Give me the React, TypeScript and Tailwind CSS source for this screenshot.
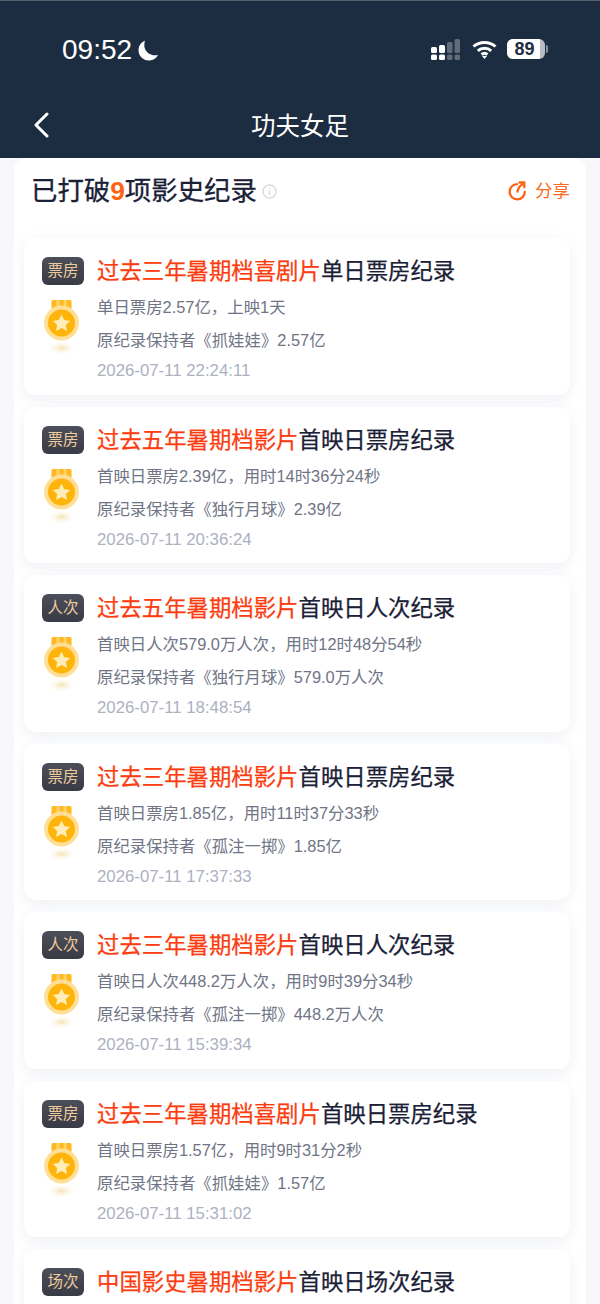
const font = { fontFamily: '"Liberation Sans", "Noto Sans CJK SC", sans-serif' };

const records = [
  { tag: '票房', red: '过去三年暑期档喜剧片', rest: '单日票房纪录', a: '单日票房2.57亿，上映1天', b: '原纪录保持者《抓娃娃》2.57亿', time: '2026-07-11 22:24:11' },
  { tag: '票房', red: '过去五年暑期档影片', rest: '首映日票房纪录', a: '首映日票房2.39亿，用时14时36分24秒', b: '原纪录保持者《独行月球》2.39亿', time: '2026-07-11 20:36:24' },
  { tag: '人次', red: '过去五年暑期档影片', rest: '首映日人次纪录', a: '首映日人次579.0万人次，用时12时48分54秒', b: '原纪录保持者《独行月球》579.0万人次', time: '2026-07-11 18:48:54' },
  { tag: '票房', red: '过去三年暑期档影片', rest: '首映日票房纪录', a: '首映日票房1.85亿，用时11时37分33秒', b: '原纪录保持者《孤注一掷》1.85亿', time: '2026-07-11 17:37:33' },
  { tag: '人次', red: '过去三年暑期档影片', rest: '首映日人次纪录', a: '首映日人次448.2万人次，用时9时39分34秒', b: '原纪录保持者《孤注一掷》448.2万人次', time: '2026-07-11 15:39:34' },
  { tag: '票房', red: '过去三年暑期档喜剧片', rest: '首映日票房纪录', a: '首映日票房1.57亿，用时9时31分2秒', b: '原纪录保持者《抓娃娃》1.57亿', time: '2026-07-11 15:31:02' },
  { tag: '场次', red: '中国影史暑期档影片', rest: '首映日场次纪录', a: '', b: '', time: '' },
];

const Medal = () => (
  <svg width="38" height="58" viewBox="0 0 38 58" className="block -translate-x-[1.5px]">
    <defs>
      <radialGradient id="medal-shadow">
        <stop offset="0%" stopColor="#f5e2b4" />
        <stop offset="100%" stopColor="#ffffff" stopOpacity="0" />
      </radialGradient>
    </defs>
    <ellipse cx="19" cy="50" rx="15" ry="7.500" fill="url(#medal-shadow)" />
    <path d="M9 3.500a1.500 1.500 0 0 1 1.500-1.500h17a1.500 1.500 0 0 1 1.500 1.500V13H9z" fill="#ffb81f" />
    <rect x="14" y="2" width="3" height="11" fill="#ffd466" />
    <rect x="21" y="2" width="3" height="11" fill="#ffd466" />
    <circle cx="19" cy="25" r="17.500" fill="#ffdf96" />
    <circle cx="19" cy="25" r="13.500" fill="#ffb40c" />
    <path d="M19 16.500l2.700 5.600 6 .8-4.400 4.200 1.200 6-5.500-3-5.500 3 1.200-6-4.400-4.200 6-.8z" fill="#ffedb8" />
  </svg>
);

const RecordCard = ({ r }: { r: (typeof records)[number] }) => (
  <div className="h-[156.5px] shrink-0 rounded-xl bg-white shadow-[0_4px_14px_rgba(170,178,200,0.2)] pl-[18px] pr-3 pt-[19px] flex gap-[13px]">
    <div className="w-[42px] shrink-0 flex flex-col items-center">
      <div className="h-7 w-[42px] rounded-md bg-gradient-to-b from-[#4c4e5a] to-[#383a46] text-[#eccb9c] text-[15.5px] leading-7 text-center">
        {r.tag}
      </div>
      <div className="mt-[13px]">
        <Medal />
      </div>
    </div>
    <div className="min-w-0 flex-1 pt-[1px]">
      <div className="text-[22.4px] leading-7 [-webkit-text-stroke:0.25px] whitespace-nowrap text-[#1a2036]">
        <span className="text-[#fb3d10]">{r.red}</span>
        {r.rest}
      </div>
      <div className="mt-[9px] text-[16.4px] leading-6 whitespace-nowrap text-[#6f7585]">{r.a}</div>
      <div className="mt-[9px] text-[16.4px] leading-6 whitespace-nowrap text-[#6f7585]">{r.b}</div>
      <div className="mt-[7px] text-[16.8px] leading-6 whitespace-nowrap text-[#adb1bf]">{r.time}</div>
    </div>
  </div>
);

export default function App() {
  return (
    <div className="w-[600px] h-[1304px] overflow-hidden bg-[#f8f8fa] flex flex-col" style={font}>
      <div className="h-[158px] shrink-0 bg-[#1d2d41] border-t border-[#59616c] flex flex-col">
        <div className="h-[95px] shrink-0 pl-[62px] pr-[52px] pt-[32px] flex justify-between items-start text-white">
          <div className="h-8 flex items-center gap-[6px] pt-[2px]">
            <span className="text-[28px] leading-8 font-medium">09:52</span>
            <svg width="21" height="21" viewBox="0 0 21 21">
              <path d="M7.500.5C3.200 1.900.5 5.800.5 10.300c0 5.800 4.700 10.200 10.300 10.200 4 0 7.500-2.200 9.200-5.500-7 1.500-13.700-3-13.700-9.800 0-1.800.3-3.300.7-4.700z" fill="#fff" />
            </svg>
          </div>
          <div className="h-8 flex items-center">
            <svg width="29" height="21" viewBox="0 0 29 21" fill="#fff" className="mr-[12px]">
              <rect x="0" y="8" width="6" height="6" rx="1.500" />
              <rect x="8" y="6" width="6" height="8" rx="1.500" />
              <rect x="0" y="15.500" width="6" height="5.500" rx="1.500" />
              <rect x="8" y="15.500" width="6" height="5.500" rx="1.500" />
              <rect x="16" y="3" width="5.500" height="11" rx="1.500" opacity=".3" />
              <rect x="23.500" y="0" width="5.500" height="14" rx="1.500" opacity=".3" />
              <rect x="16" y="15.500" width="5.500" height="5.500" rx="1.500" opacity=".3" />
              <rect x="23.500" y="15.500" width="5.500" height="5.500" rx="1.500" opacity=".3" />
            </svg>
            <svg width="25" height="19" viewBox="0 0 25 19" fill="none" stroke="#fff" strokeWidth="3" className="mr-[10px]">
              <path d="M1.500 6.500C7.500 1 17.500 1 23.500 6.500" />
              <path d="M5.800 10.800c3.700-3.300 9.700-3.300 13.400 0" />
              <path d="M9.500 14.500c1.800-1.400 4.200-1.400 6 0" />
              <path d="M12.500 19l-2.500-3h5z" fill="#fff" stroke="none" />
            </svg>
            <div className="flex items-center gap-px">
              <div className="relative h-[20px] w-[38px] rounded-[6px] bg-[#b9bdc3] overflow-hidden">
                <div className="h-full w-[33px] bg-white" />
                <span className="absolute inset-0 pr-[3px] text-center text-[18px] leading-[20px] font-bold text-[#1d2d41]">89</span>
              </div>
              <div className="h-[8px] w-[2px] rounded-r bg-[#8a929d]" />
            </div>
          </div>
        </div>
        <div className="relative flex-1 flex items-center justify-center pb-[1px]">
          <svg width="16" height="26" viewBox="0 0 16 26" fill="none" stroke="#fff" strokeWidth="3" strokeLinecap="round" strokeLinejoin="round" className="absolute left-[33px] top-[16px]">
            <path d="M14 2L3 13l11 11" />
          </svg>
          <span className="text-[24.5px] leading-8 text-white">功夫女足</span>
        </div>
      </div>
      <div className="mx-[14px] flex-1 min-h-0 rounded-t-xl bg-white pl-[10px] pr-[2px] overflow-hidden">
        <div className="h-[80px] flex items-start justify-between pl-[7px] pt-[17px]">
          <div className="flex items-center gap-[5px]">
            <span className="text-[26.4px] leading-8 [-webkit-text-stroke:0.3px] text-[#1a2036] whitespace-nowrap">
              已打破<span className="text-[#fd6312] font-bold [-webkit-text-stroke:0px]">9</span>项影史纪录
            </span>
            <svg width="15" height="15" viewBox="0 0 15 15" fill="none">
              <circle cx="7.500" cy="7.500" r="6.500" stroke="#dcdde3" strokeWidth="1.500" />
              <path d="M7.500 6.500v4.500M7.500 3.800v1.400" stroke="#dcdde3" strokeWidth="1.500" />
            </svg>
          </div>
          <div className="flex items-center gap-2 text-[#fb6a1e] text-[17.5px] leading-8 pr-[14px]">
            <svg width="20" height="20" viewBox="0 0 20 20" fill="none" stroke="#fd6312" strokeWidth="2.300">
              <path d="M10 3.200a7.600 7.600 0 1 0 7.800 7.600" strokeLinecap="round" />
              <path d="M10.500 10.500c.5-3 2-5.500 5-7" strokeLinecap="round" />
              <path d="M12.500 1.500h4.800v4.800" strokeLinecap="round" strokeLinejoin="round" />
            </svg>
            <span>分享</span>
          </div>
        </div>
        <div className="flex flex-col gap-3 mr-[14px]">
          {records.map((r, i) => (
            <RecordCard key={i} r={r} />
          ))}
        </div>
      </div>
    </div>
  );
}
